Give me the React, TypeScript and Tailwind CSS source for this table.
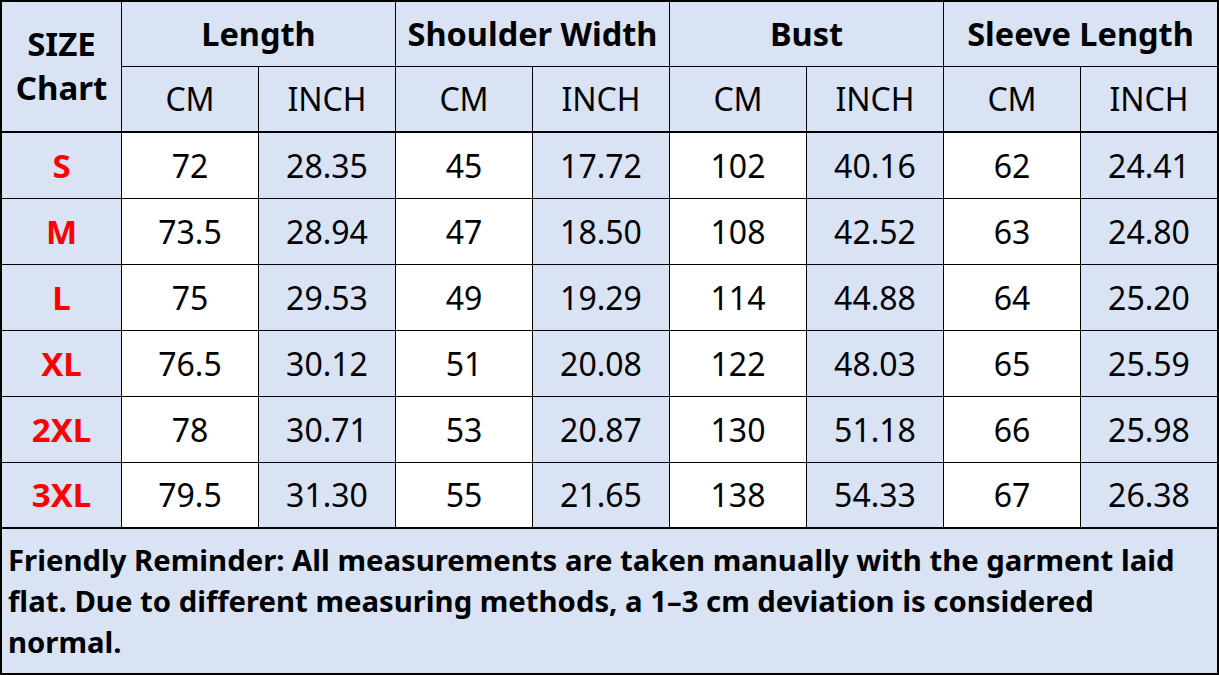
import React from "react";

const groups = ["Length", "Shoulder Width", "Bust", "Sleeve Length"];

const rows: [string, string[]][] = [
  ["S", ["72", "28.35", "45", "17.72", "102", "40.16", "62", "24.41"]],
  ["M", ["73.5", "28.94", "47", "18.50", "108", "42.52", "63", "24.80"]],
  ["L", ["75", "29.53", "49", "19.29", "114", "44.88", "64", "25.20"]],
  ["XL", ["76.5", "30.12", "51", "20.08", "122", "48.03", "65", "25.59"]],
  ["2XL", ["78", "30.71", "53", "20.87", "130", "51.18", "66", "25.98"]],
  ["3XL", ["79.5", "31.30", "55", "21.65", "138", "54.33", "67", "26.38"]],
];

const App: React.FC = () => {
  return (
    <div
      className="w-[1219px] h-[675px] bg-white border-2 border-black flex flex-col text-black"
      style={{ fontFamily: '"Noto Sans", "Open Sans", sans-serif' }}
    >
      <div className="grid grid-cols-[120px_repeat(7,137px)_136px] grid-rows-[65px_66px_repeat(5,66px)_66px]">
        <div className="row-span-2 bg-[#dae3f3] border-r border-b-2 border-black flex flex-col items-center justify-center text-[33px] font-bold leading-[44px] pb-[1px]">
          <span>SIZE</span>
          <span>Chart</span>
        </div>
        {groups.map((g, i) => (
          <div
            key={g}
            className={`col-span-2 bg-[#dae3f3] border-b border-black flex items-center justify-center text-[32.5px] font-bold ${
              i < 3 ? "border-r" : ""
            }`}
          >
            {g}
          </div>
        ))}
        {groups.flatMap((g, i) =>
          ["CM", "INCH"].map((u, j) => (
            <div
              key={g + u}
              className={`bg-[#dae3f3] border-b-2 border-black flex items-center justify-center text-[32px] ${
                i === 3 && j === 1 ? "" : "border-r"
              }`}
            >
              {u}
            </div>
          ))
        )}
        {rows.map(([size, vals], r) => (
          <React.Fragment key={size}>
            <div
              className={`bg-[#dae3f3] border-r border-black flex items-center justify-center text-[33px] font-bold text-[#ff0000] ${
                r === 5 ? "border-b-2" : "border-b"
              }`}
            >
              {size}
            </div>
            {vals.map((v, c) => (
              <div
                key={c}
                className={`border-black flex items-center justify-center text-[32px] ${
                  c % 2 === 0 ? "bg-white" : "bg-[#dae3f3]"
                } ${c < 7 ? "border-r" : ""} ${r === 5 ? "border-b-2" : "border-b"}`}
              >
                {v}
              </div>
            ))}
          </React.Fragment>
        ))}
      </div>
      <div className="flex-1 bg-[#dae3f3] flex items-center pl-[6px] text-[29.3px] font-bold leading-[41px]">
        <p className="whitespace-nowrap">
          Friendly Reminder: All measurements are taken manually with the garment laid
          <br />
          flat. Due to different measuring methods, a 1–3 cm deviation is considered
          <br />
          normal.
        </p>
      </div>
    </div>
  );
};

export default App;
